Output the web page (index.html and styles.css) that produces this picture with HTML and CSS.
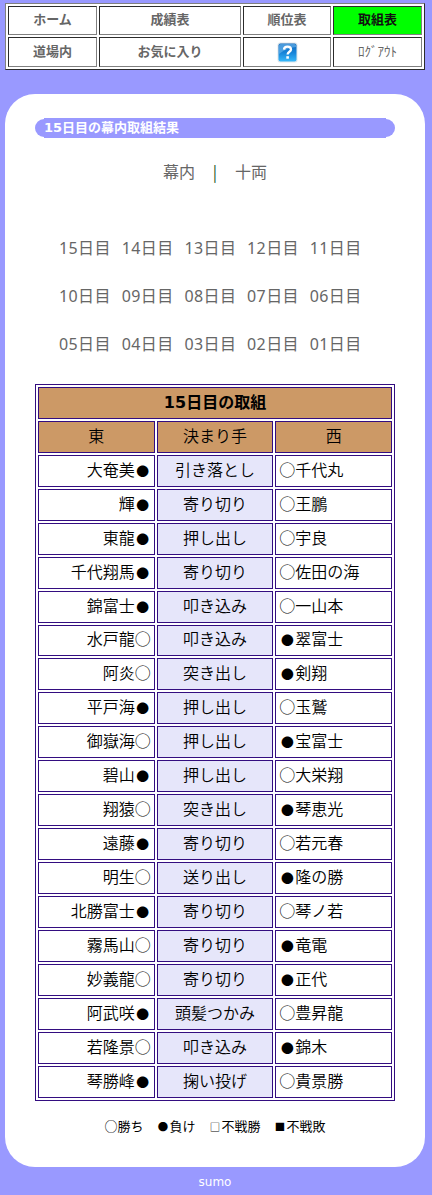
FILE: index.html
```html
<!DOCTYPE html>
<html lang="ja">
<head>
  <meta charset="UTF-8">
  <meta name="viewport" content="width=device-width, initial-scale=1.0">
  <title>15日目の幕内取組結果</title>
  <link rel="stylesheet" href="styles.css">
</head>
<body>
  <table class="menu">
    <tr>
      <td class="narrow"><a href="#">ホーム</a></td>
      <td class="wide"><a href="#">成績表</a></td>
      <td class="middle"><a href="#">順位表</a></td>
      <td class="narrow current"><a href="#">取組表</a></td>
    </tr>
    <tr class="second">
      <td><a href="#">道場内</a></td>
      <td><a href="#">お気に入り</a></td>
      <td>
        <a href="#" class="help">
          <svg width="21" height="21" viewBox="0 0 21 21">
            <defs>
              <linearGradient id="helpBlue" x1="0" y1="0" x2="0" y2="1">
                <stop offset="0" stop-color="#1269bd"/>
                <stop offset="0.5" stop-color="#1683d8"/>
                <stop offset="1" stop-color="#37b8fa"/>
              </linearGradient>
            </defs>
            <rect x="0.5" y="0.5" width="20" height="20" rx="2.5" fill="#dfe6ea"/>
            <rect x="1.5" y="1.5" width="18" height="18" rx="2" fill="url(#helpBlue)"/>
            <path d="M2 3.5Q2 2 3.5 2H17.500Q19 2 19 3.500V5Q9 6 2 12Z" fill="#6fb9ee" opacity="0.6"/>
            <path d="M7 7.600C7.100 5.600 8.500 4.600 10.500 4.600C12.700 4.600 14 5.800 14 7.500C14 9.800 10.600 9.800 10.600 12.600" fill="none" stroke="#fff" stroke-width="2.300"/>
            <rect x="9.300" y="14.200" width="2.600" height="2.500" fill="#fff"/>
          </svg>
        </a>
      </td>
      <td><a href="#" class="logout">ﾛｸﾞｱｳﾄ</a></td>
    </tr>
  </table>

  <div class="container">
    <h1><span>15日目の幕内取組結果</span></h1>

    <div class="division">
      <a href="#">幕内</a><span class="bar">|</span><a href="#">十両</a>
    </div>

    <div class="days">
      <a href="#">15日目</a><a href="#">14日目</a><a href="#">13日目</a><a href="#">12日目</a><a href="#">11日目</a>
      <a href="#">10日目</a><a href="#">09日目</a><a href="#">08日目</a><a href="#">07日目</a><a href="#">06日目</a>
      <a href="#">05日目</a><a href="#">04日目</a><a href="#">03日目</a><a href="#">02日目</a><a href="#">01日目</a>
    </div>

    <table class="torikumi">
      <tr><th colspan="3">15日目の取組</th></tr>
      <tr class="head"><td>東</td><td>決まり手</td><td>西</td></tr>
      <tr><td>大奄美<i>●</i></td><td>引き落とし</td><td>○千代丸</td></tr>
      <tr><td>輝<i>●</i></td><td>寄り切り</td><td>○王鵬</td></tr>
      <tr><td>東龍<i>●</i></td><td>押し出し</td><td>○宇良</td></tr>
      <tr><td>千代翔馬<i>●</i></td><td>寄り切り</td><td>○佐田の海</td></tr>
      <tr><td>錦富士<i>●</i></td><td>叩き込み</td><td>○一山本</td></tr>
      <tr class="short"><td>水戸龍○</td><td>叩き込み</td><td><i>●</i>翠富士</td></tr>
      <tr><td>阿炎○</td><td>突き出し</td><td><i>●</i>剣翔</td></tr>
      <tr><td>平戸海<i>●</i></td><td>押し出し</td><td>○玉鷲</td></tr>
      <tr><td>御嶽海○</td><td>押し出し</td><td><i>●</i>宝富士</td></tr>
      <tr><td>碧山<i>●</i></td><td>押し出し</td><td>○大栄翔</td></tr>
      <tr><td>翔猿○</td><td>突き出し</td><td><i>●</i>琴恵光</td></tr>
      <tr><td>遠藤<i>●</i></td><td>寄り切り</td><td>○若元春</td></tr>
      <tr><td>明生○</td><td>送り出し</td><td><i>●</i>隆の勝</td></tr>
      <tr><td>北勝富士<i>●</i></td><td>寄り切り</td><td>○琴ノ若</td></tr>
      <tr><td>霧馬山○</td><td>寄り切り</td><td><i>●</i>竜電</td></tr>
      <tr><td>妙義龍○</td><td>寄り切り</td><td><i>●</i>正代</td></tr>
      <tr><td>阿武咲<i>●</i></td><td>頭髪つかみ</td><td>○豊昇龍</td></tr>
      <tr><td>若隆景○</td><td>叩き込み</td><td><i>●</i>錦木</td></tr>
      <tr><td>琴勝峰<i>●</i></td><td>掬い投げ</td><td>○貴景勝</td></tr>
    </table>

    <p class="legend">○勝ち　<i>●</i>負け　<i>□</i>不戦勝　<i>■</i>不戦敗</p>
  </div>

  <div class="footer">sumo</div>
</body>
</html>
```
FILE: styles.css
```css
body {
  margin: 0;
  padding: 3px 7px 0 5px;
  background-color: #9999ff;
  color: #000;
  font-family: "Noto Sans CJK JP", sans-serif;
  font-size: 16px;
  line-height: 24px;
}
a {
  color: #666;
  text-decoration: none;
}
table {
  box-sizing: border-box;
  border-spacing: 2px;
  table-layout: fixed;
}
td, th {
  box-sizing: border-box;
}
/* ●□■は一回り小さく */
i {
  display: inline-block;
  width: 1.25em;
  font-size: 0.8em;
  font-style: normal;
  line-height: 1;
  text-align: center;
}

/* メニュー */
.menu {
  width: 420px;
  height: 67px;
  background-color: #fff;
  border: 1px solid;
  border-color: #808080 #2c2c2c #2c2c2c #808080;
  font-size: 13px;
  font-weight: bold;
  line-height: 20px;
}
.menu td {
  height: 29px;
  padding: 0 0 3px;
  border: 1px solid;
  border-color: #2c2c2c #808080 #808080 #2c2c2c;
  text-align: center;
}
.menu .second td {
  height: 30px;
  padding-bottom: 2px;
}
.menu .narrow {
  width: 89px;
}
.menu .wide {
  width: 142px;
}
.menu .middle {
  width: 88px;
}
.menu .current {
  background-color: #0f0;
}
.menu .current a {
  color: #111;
}
.menu .help svg {
  display: block;
  margin: 2px auto 0;
}
.menu .logout {
  font-weight: normal;
}

/* 本文 */
.container {
  box-sizing: border-box;
  width: 420px;
  height: 1073px;
  margin-top: 24px;
  padding: 24px 30px 0;
  background-color: #fff;
  border-radius: 30px;
}
h1 {
  display: flex;
  align-items: center;
  height: 20px;
  margin: 0;
  color: #fff;
  font-family: "DejaVu Sans", "Noto Sans CJK JP", sans-serif;
  font-size: 13px;
  line-height: 19px;
}
h1::before, h1::after {
  content: "";
  width: 9px;
  height: 18px;
  background-color: #9999ff;
  border-radius: 9px 0 0 9px;
}
h1::after {
  border-radius: 0 9px 9px 0;
}
h1 span {
  flex: 1;
  height: 20px;
  background-color: #9999ff;
}
.division {
  display: flex;
  justify-content: center;
  margin-top: 21px;
}
.division .bar {
  width: 40px;
  color: #1d5420;
  text-align: center;
}
.days {
  display: grid;
  grid-template-columns: repeat(5, 62.7px);
  grid-auto-rows: 48px;
  margin: 41px 0 0 24px;
  font-family: "Noto Sans", "Noto Sans CJK JP", sans-serif;
  letter-spacing: 0.4px;
  line-height: 49px;
}

/* 取組表 */
.torikumi {
  width: 360px;
  margin-top: 16px;
  border: 1px solid #330d80;
}
.torikumi td, .torikumi th {
  height: 32px;
  padding: 0 3px 5px;
  border: 1px solid #330d80;
  font-weight: 350;
  line-height: 24px;
  text-align: center;
}
.torikumi .short td {
  height: 31px;
}
.torikumi th, .torikumi .head td {
  background-color: #cc9966;
}
.torikumi th {
  padding-bottom: 1px;
  font-family: "DejaVu Sans", "Noto Sans CJK JP", sans-serif;
  font-weight: bold;
}
.torikumi tr:not(.head) td:first-child {
  text-align: right;
}
.torikumi tr:not(.head) td:nth-child(2) {
  background-color: #e6e6fa;
}
.torikumi tr:not(.head) td:last-child {
  text-align: left;
}
.legend {
  margin: 13px 0 0;
  font-size: 13px;
  text-align: center;
}

.footer {
  margin-top: 5px;
  color: #fff;
  font-family: "DejaVu Sans", sans-serif;
  font-size: 12px;
  line-height: 20px;
  text-align: center;
}
```
